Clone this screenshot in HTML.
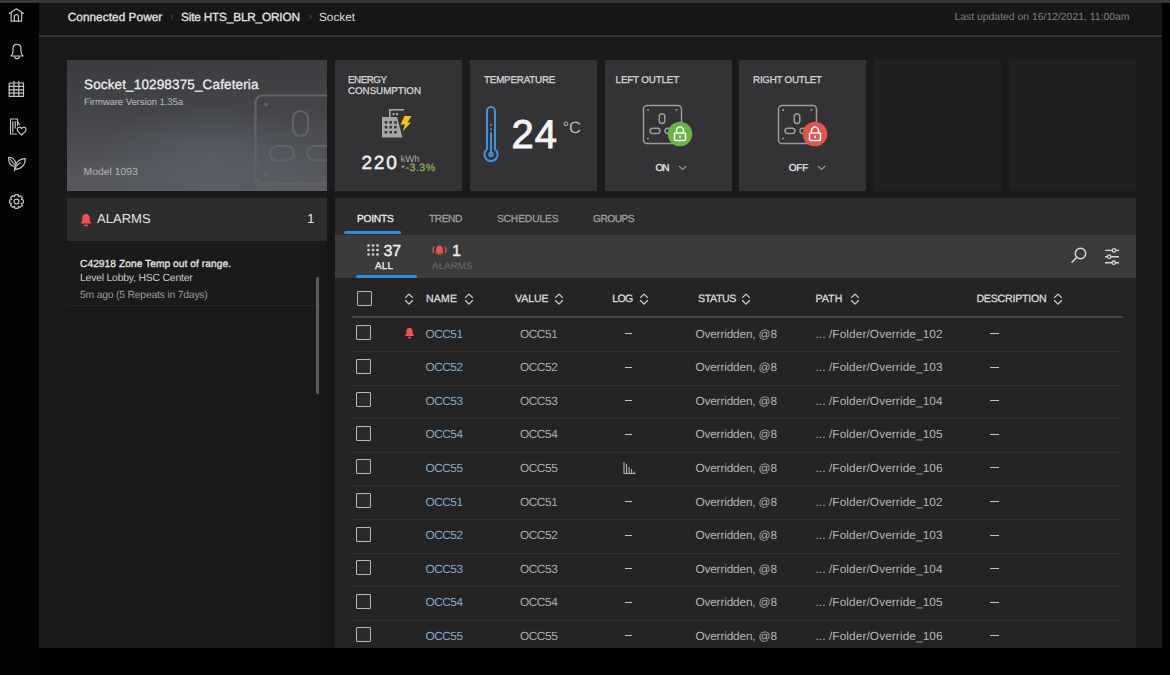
<!DOCTYPE html>
<html><head><meta charset="utf-8"><title>Socket</title>
<style>
*{margin:0;padding:0;box-sizing:border-box}
html,body{width:1170px;height:675px;overflow:hidden;background:#000;font-family:"Liberation Sans",sans-serif;text-rendering:geometricPrecision}
.r{position:absolute;display:block}
.t{position:absolute;white-space:nowrap}
</style></head><body>
<div class="r" style="left:0px;top:0px;width:1170px;height:675px;background:#000;"></div>
<div class="r" style="left:0px;top:0px;width:1170px;height:3px;background:#363636;"></div>
<div class="r" style="left:0px;top:3px;width:39px;height:672px;background:#030303;"></div>
<div class="r" style="left:39px;top:3px;width:1123px;height:645px;background:#1a1a1a;"></div>
<div class="r" style="left:39px;top:3px;width:1123px;height:31px;background:#171717;"></div>
<div class="r" style="left:39px;top:34px;width:1123px;height:1px;background:#121212;"></div>
<div class="r" style="left:39px;top:35px;width:1123px;height:2px;background:#313131;"></div>
<svg class="r" style="left:7px;top:7px;" width="18" height="17" viewBox="0 0 18 17"><g fill="none" stroke="#c4c4c4" stroke-width="1.2" stroke-linecap="round" stroke-linejoin="round"><path d="M2.3 6.4 L9.4 1.8 L16.5 6.4"/><path d="M4.2 5.3 V14.2 H14.6 V5.3"/><path d="M7.3 14 V9.6 Q7.3 7.6 9.4 7.6 Q11.5 7.6 11.5 9.6 V14"/></g></svg>
<svg class="r" style="left:7px;top:38px;" width="20" height="23" viewBox="0 0 20 23"><g fill="none" stroke="#c4c4c4" stroke-width="1.2" stroke-linecap="round" stroke-linejoin="round"><path d="M3.8 18 C5.5 16.8 6 15.5 6 13.5 V10.5 C6 7.8 7.8 6.3 10 6.3 C12.2 6.3 14 7.8 14 10.5 V13.5 C14 15.5 14.5 16.8 16.2 18 Z"/><path d="M7.6 18.3 A2.4 2.4 0 0 0 12.4 18.3"/></g></svg>
<svg class="r" style="left:7px;top:80px;" width="19" height="19" viewBox="0 0 19 19"><g fill="none" stroke="#c4c4c4" stroke-width="1.2" stroke-linecap="round" stroke-linejoin="round"><rect x="2.2" y="3" width="14.3" height="13.3"/><path d="M2.2 6.4 H16.5 M2.2 9.8 H16.5 M2.2 13.1 H16.5 M6.9 3 V16.3 M11.8 3 V16.3 M6.9 1.3 V4.5 M11.8 1.3 V4.5"/></g></svg>
<svg class="r" style="left:8px;top:117px;" width="20" height="20" viewBox="0 0 20 20"><g fill="none" stroke="#c4c4c4" stroke-width="1.2" stroke-linecap="round" stroke-linejoin="round"><path d="M8.5 17 H2.5 V2 H9.5 V8.5"/><path d="M4.8 4.5 V15 M7.2 4.5 V11"/><path d="M10 5 L11.5 7.5"/><path d="M13.6 18 L9.9 14.3 C8.6 13 9.2 10.2 11.3 10.2 C12.4 10.2 13.1 10.9 13.6 11.6 C14.1 10.9 14.8 10.2 15.9 10.2 C18 10.2 18.6 13 17.3 14.3 Z"/></g></svg>
<svg class="r" style="left:6px;top:154px;" width="21" height="19" viewBox="0 0 21 19"><g fill="none" stroke="#c4c4c4" stroke-width="1.2" stroke-linecap="round" stroke-linejoin="round"><path d="M8.2 12.3 C4.6 11.6 2.4 8.2 2.6 3.4 C6.2 3.4 9.2 5.6 9.6 9.2"/><path d="M8.9 15.4 C8.6 9.8 12.2 5 19.2 4.6 C19.6 10.6 15.6 15 8.9 15.4 Z"/><path d="M8.4 17 C8.8 13.8 11 10.8 14.2 9"/><path d="M4.5 5.5 L8.4 10.5"/></g></svg>
<svg class="r" style="left:7px;top:192px;" width="19" height="19" viewBox="0 0 19 19"><g fill="none" stroke="#c4c4c4" stroke-width="1.2" stroke-linecap="round" stroke-linejoin="round"><path d="M16.33 7.97 L16.33 11.03 L14.29 11.52 L14.32 11.45 L15.41 13.25 L13.25 15.41 L11.45 14.32 L11.52 14.29 L11.03 16.33 L7.97 16.33 L7.48 14.29 L7.55 14.32 L5.75 15.41 L3.59 13.25 L4.68 11.45 L4.71 11.52 L2.67 11.03 L2.67 7.97 L4.71 7.48 L4.68 7.55 L3.59 5.75 L5.75 3.59 L7.55 4.68 L7.48 4.71 L7.97 2.67 L11.03 2.67 L11.52 4.71 L11.45 4.68 L13.25 3.59 L15.41 5.75 L14.32 7.55 L14.29 7.48 Z"/><circle cx="9.5" cy="9.5" r="2.4"/></g></svg>
<div class="t" style="left:67.70px;top:11.82px;font-size:11.8px;line-height:11.8px;font-weight:normal;color:#e2e2e2;letter-spacing:0.058px;-webkit-text-stroke:0.3px #e2e2e2;">Connected Power</div>
<div class="t" style="left:170.00px;top:12.16px;font-size:11px;line-height:11px;font-weight:normal;color:#4a4a4a;">&#8250;</div>
<div class="t" style="left:181.00px;top:11.82px;font-size:11.8px;line-height:11.8px;font-weight:normal;color:#e2e2e2;letter-spacing:-0.174px;-webkit-text-stroke:0.3px #e2e2e2;">Site HTS_BLR_ORION</div>
<div class="t" style="left:308.50px;top:12.16px;font-size:11px;line-height:11px;font-weight:normal;color:#4a4a4a;">&#8250;</div>
<div class="t" style="left:319.00px;top:11.82px;font-size:11.8px;line-height:11.8px;font-weight:normal;color:#dedede;letter-spacing:-0.016px;">Socket</div>
<div class="t" style="left:954.50px;top:12.90px;font-size:10.4px;line-height:10.4px;font-weight:normal;color:#808080;letter-spacing:0.001px;">Last updated on 16/12/2021, 11:00am</div>
<div class="r" style="left:67px;top:60px;width:260px;height:131px;background:radial-gradient(ellipse 45% 40% at 55% 75%,rgba(95,105,118,0.45),rgba(95,105,118,0) 100%),linear-gradient(178deg,#3b3c3f 0%,#444549 40%,#515358 75%,#5a5c61 100%);overflow:hidden"></div>
<svg class="r" style="left:254px;top:94px;overflow:hidden" width="73" height="91" viewBox="0 0 73 91"><g fill="none" stroke="#606267" stroke-width="2.2"><rect x="1.5" y="1.5" width="95" height="88" rx="7"/><rect x="39" y="17" width="15" height="25" rx="7.5"/><rect x="16" y="52" width="24" height="14.5" rx="7.2"/><rect x="53.5" y="52" width="24" height="14.5" rx="7.2"/></g><g fill="#606267"><circle cx="12" cy="10.5" r="1.9"/><circle cx="12" cy="80" r="1.9"/></g></svg>
<div class="t" style="left:84.00px;top:78.39px;font-size:13.5px;line-height:13.5px;font-weight:normal;color:#ececec;letter-spacing:0.140px;-webkit-text-stroke:0.3px #ececec;">Socket_10298375_Cafeteria</div>
<div class="t" style="left:84.00px;top:98.44px;font-size:9.5px;line-height:9.5px;font-weight:normal;color:#b9babd;letter-spacing:-0.063px;">Firmware Version 1.35a</div>
<div class="t" style="left:83.50px;top:168.10px;font-size:10.4px;line-height:10.4px;font-weight:normal;color:#b5b6b9;letter-spacing:-0.001px;">Model 1093</div>
<div class="r" style="left:335.0px;top:60px;width:127px;height:131px;background:#333335;"></div>
<div class="r" style="left:469.75px;top:60px;width:127px;height:131px;background:#333335;"></div>
<div class="r" style="left:604.5px;top:60px;width:127px;height:131px;background:#333335;"></div>
<div class="r" style="left:739.25px;top:60px;width:127px;height:131px;background:#333335;"></div>
<div class="r" style="left:874.0px;top:60px;width:127px;height:131px;background:#202020;"></div>
<div class="r" style="left:1008.75px;top:60px;width:127px;height:131px;background:#202020;"></div>
<div class="t" style="left:348.00px;top:75.99px;font-size:9.8px;line-height:9.8px;font-weight:normal;color:#d2d2d2;letter-spacing:-0.475px;-webkit-text-stroke:0.3px #d2d2d2;">ENERGY</div>
<div class="t" style="left:348.00px;top:86.99px;font-size:9.8px;line-height:9.8px;font-weight:normal;color:#d2d2d2;letter-spacing:-0.048px;-webkit-text-stroke:0.3px #d2d2d2;">CONSUMPTION</div>
<div class="t" style="left:484.00px;top:76.19px;font-size:9.8px;line-height:9.8px;font-weight:normal;color:#d2d2d2;letter-spacing:-0.191px;-webkit-text-stroke:0.3px #d2d2d2;">TEMPERATURE</div>
<div class="t" style="left:615.60px;top:76.19px;font-size:9.8px;line-height:9.8px;font-weight:normal;color:#d2d2d2;letter-spacing:-0.156px;-webkit-text-stroke:0.3px #d2d2d2;">LEFT OUTLET</div>
<div class="t" style="left:753.10px;top:76.19px;font-size:9.8px;line-height:9.8px;font-weight:normal;color:#d2d2d2;letter-spacing:-0.261px;-webkit-text-stroke:0.3px #d2d2d2;">RIGHT OUTLET</div>
<svg class="r" style="left:375px;top:102px;" width="40" height="40" viewBox="0 0 40 40"><g fill="#a6a6a6"><path d="M7 15 H22 L27.5 35.5 H7 Z"/><rect x="14" y="7" width="15" height="1.6"/><rect x="14" y="7" width="1.6" height="8"/><rect x="17.5" y="11" width="2.2" height="2.2"/><rect x="21" y="11" width="2.2" height="2.2"/></g><g fill="#3a3a3c"><rect x="9.7" y="19.1" width="2.6" height="2.6"/><rect x="14.4" y="19.1" width="2.6" height="2.6"/><rect x="19.1" y="19.1" width="2.6" height="2.6"/><rect x="9.7" y="23.9" width="2.6" height="2.6"/><rect x="14.4" y="23.9" width="2.6" height="2.6"/><rect x="19.1" y="23.9" width="2.6" height="2.6"/><rect x="9.7" y="28.9" width="2.6" height="2.6"/><rect x="14.4" y="28.9" width="2.6" height="2.6"/><rect x="19.1" y="28.9" width="2.6" height="2.6"/></g><path fill="#f0c419" d="M29.5 14 H36.5 L32.5 20.5 H36 L27.5 29.5 L30 22.5 H25.5 Z"/></svg>
<div class="t" style="left:361.50px;top:153.72px;font-size:19px;line-height:19px;font-weight:normal;color:#f0f0f0;letter-spacing:1.748px;-webkit-text-stroke:0.5px #f0f0f0">220</div>
<div class="t" style="left:400.50px;top:155.40px;font-size:9.6px;line-height:9.6px;font-weight:normal;color:#a8a8a8;">kWh</div>
<svg class="r" style="left:400px;top:165px;" width="6" height="4" viewBox="0 0 6 4"><path d="M0.8 0.8 H5 L2.9 3.2 Z" fill="#9a9a9a"/></svg>
<div class="t" style="left:405.50px;top:162.65px;font-size:10.6px;line-height:10.6px;font-weight:normal;color:#88ab58;letter-spacing:0.478px;-webkit-text-stroke:0.3px #88ab58;">-3.3%</div>
<svg class="r" style="left:481px;top:103px;" width="20" height="62" viewBox="0 0 20 62"><g fill="none" stroke="#3d93d9" stroke-width="2"><path d="M6 46.3 V8 A4 4 0 0 1 14 8 V46.3 A6.6 6.6 0 1 1 6 46.3 Z"/><circle cx="10" cy="51.5" r="1.7"/><path d="M10 29.5 V49.5"/></g><g fill="#3d93d9"><circle cx="10" cy="21.8" r="1"/><circle cx="10" cy="26.2" r="1"/></g></svg>
<div class="t" style="left:511.50px;top:115.47px;font-size:40px;line-height:40px;font-weight:normal;color:#f5f5f5;letter-spacing:1.000px;-webkit-text-stroke:0.9px #f5f5f5">24</div>
<div class="t" style="left:562.50px;top:119.50px;font-size:16.5px;line-height:16.5px;font-weight:normal;color:#b8b8b8;">&#176;C</div>
<svg class="r" style="left:642.0px;top:103.5px;" width="42" height="41" viewBox="0 0 42 41"><g fill="none" stroke="#9a9a9a" stroke-width="1.5"><rect x="1.5" y="1.5" width="38" height="38" rx="3.5"/><rect x="17.25" y="9.85" width="5.5" height="9.6" rx="2.75"/><rect x="8" y="24.25" width="10" height="5.2" rx="2.6"/><rect x="23" y="24.25" width="10" height="5.2" rx="2.6"/></g><g fill="#9a9a9a"><circle cx="6" cy="6" r="1"/><circle cx="34.5" cy="6" r="1"/><circle cx="6" cy="34.5" r="1"/></g></svg>
<svg class="r" style="left:666.9px;top:121.1px;" width="26" height="26" viewBox="0 0 26 26"><circle cx="13" cy="13" r="12.3" fill="#69b443"/><g fill="none" stroke="#fff" stroke-width="1.6"><path d="M9.5 12 V9.5 A3.5 3.5 0 0 1 16.5 9.5 V12"/><rect x="7.5" y="12" width="11" height="7.5" rx="1"/></g><path d="M13 14.5 V17" stroke="#fff" stroke-width="1.5"/></svg>
<div class="t" style="left:655.50px;top:164.49px;font-size:10px;line-height:10px;font-weight:normal;color:#e6e6e6;letter-spacing:-1.000px;-webkit-text-stroke:0.3px #e6e6e6;">ON</div>
<svg class="r" style="left:677.8px;top:164.5px;" width="10" height="6" viewBox="0 0 10 6"><path d="M1 1 L4.6 4.4 L8.2 1" fill="none" stroke="#9a9a9a" stroke-width="1.1"/></svg>
<svg class="r" style="left:776.75px;top:103.5px;" width="42" height="41" viewBox="0 0 42 41"><g fill="none" stroke="#9a9a9a" stroke-width="1.5"><rect x="1.5" y="1.5" width="38" height="38" rx="3.5"/><rect x="17.25" y="9.85" width="5.5" height="9.6" rx="2.75"/><rect x="8" y="24.25" width="10" height="5.2" rx="2.6"/><rect x="23" y="24.25" width="10" height="5.2" rx="2.6"/></g><g fill="#9a9a9a"><circle cx="6" cy="6" r="1"/><circle cx="34.5" cy="6" r="1"/><circle cx="6" cy="34.5" r="1"/></g></svg>
<svg class="r" style="left:801.65px;top:121.1px;" width="26" height="26" viewBox="0 0 26 26"><circle cx="13" cy="13" r="12.3" fill="#e4534c"/><g fill="none" stroke="#fff" stroke-width="1.6"><path d="M9.5 12 V9.5 A3.5 3.5 0 0 1 16.5 9.5 V12"/><rect x="7.5" y="12" width="11" height="7.5" rx="1"/></g><path d="M13 14.5 V17" stroke="#fff" stroke-width="1.5"/></svg>
<div class="t" style="left:788.70px;top:164.49px;font-size:10px;line-height:10px;font-weight:normal;color:#e6e6e6;letter-spacing:-0.150px;-webkit-text-stroke:0.3px #e6e6e6;">OFF</div>
<svg class="r" style="left:817.3px;top:164.5px;" width="10" height="6" viewBox="0 0 10 6"><path d="M1 1 L4.6 4.4 L8.2 1" fill="none" stroke="#9a9a9a" stroke-width="1.1"/></svg>
<div class="r" style="left:67px;top:198px;width:260px;height:43px;background:#2d2d2d;"></div>
<svg class="r" style="left:80px;top:212.5px;" width="12" height="14" viewBox="0 0 12 14"><path fill="#f0524f" d="M6 0.8 C8.6 0.8 9.8 3 9.8 5.5 V8 L11.5 10.5 H0.5 L2.2 8 V5.5 C2.2 3 3.4 0.8 6 0.8 Z"/><rect x="4" y="11.6" width="4" height="1.6" rx="0.8" fill="#f0524f"/></svg>
<div class="t" style="left:97.10px;top:212.31px;font-size:13px;line-height:13px;font-weight:normal;color:#e2e2e2;">ALARMS</div>
<div class="t" style="left:307.30px;top:212.31px;font-size:13px;line-height:13px;font-weight:normal;color:#e2e2e2;">1</div>
<div class="t" style="left:80.00px;top:259.87px;font-size:10.2px;line-height:10.2px;font-weight:normal;color:#e4e4e4;letter-spacing:0.057px;-webkit-text-stroke:0.3px #e4e4e4;">C42918 Zone Temp out of range.</div>
<div class="t" style="left:80.00px;top:274.30px;font-size:10.4px;line-height:10.4px;font-weight:normal;color:#c9c9c9;letter-spacing:-0.198px;">Level Lobby, HSC Center</div>
<div class="t" style="left:80.00px;top:290.50px;font-size:10.4px;line-height:10.4px;font-weight:normal;color:#9b9b9b;letter-spacing:-0.216px;">5m ago (5 Repeats in 7days)</div>
<div class="r" style="left:67px;top:305px;width:253px;height:1px;background:#262626;"></div>
<div class="r" style="left:316px;top:277px;width:3px;height:117px;background:#5a5a5a;border-radius:1.5px"></div>
<div class="r" style="left:327px;top:191px;width:8px;height:457px;background:#171717;"></div>
<div class="r" style="left:335px;top:198px;width:801px;height:450px;background:#242424;"></div>
<div class="r" style="left:335px;top:198px;width:801px;height:37px;background:#2c2c2c;"></div>
<div class="r" style="left:335px;top:235px;width:801px;height:43px;background:#3b3b3b;"></div>
<div class="t" style="left:357.00px;top:214.87px;font-size:10.2px;line-height:10.2px;font-weight:normal;color:#e8e8e8;letter-spacing:-0.247px;-webkit-text-stroke:0.3px #e8e8e8;">POINTS</div>
<div class="t" style="left:429.00px;top:214.87px;font-size:10.2px;line-height:10.2px;font-weight:normal;color:#9c9c9c;letter-spacing:-0.448px;-webkit-text-stroke:0.3px #9c9c9c;">TREND</div>
<div class="t" style="left:496.90px;top:214.87px;font-size:10.2px;line-height:10.2px;font-weight:normal;color:#9c9c9c;letter-spacing:-0.085px;-webkit-text-stroke:0.3px #9c9c9c;">SCHEDULES</div>
<div class="t" style="left:593.00px;top:214.87px;font-size:10.2px;line-height:10.2px;font-weight:normal;color:#9c9c9c;letter-spacing:-0.511px;-webkit-text-stroke:0.3px #9c9c9c;">GROUPS</div>
<div class="r" style="left:343.5px;top:231px;width:57px;height:3px;background:#2a8edb;border-radius:1.5px"></div>
<svg class="r" style="left:366.5px;top:243.5px;" width="13" height="13" viewBox="0 0 13 13"><g fill="#d0d0d0"><circle cx="1.5" cy="1.5" r="1.35"/><circle cx="1.5" cy="6.0" r="1.35"/><circle cx="1.5" cy="10.5" r="1.35"/><circle cx="6.0" cy="1.5" r="1.35"/><circle cx="6.0" cy="6.0" r="1.35"/><circle cx="6.0" cy="10.5" r="1.35"/><circle cx="10.5" cy="1.5" r="1.35"/><circle cx="10.5" cy="6.0" r="1.35"/><circle cx="10.5" cy="10.5" r="1.35"/></g></svg>
<div class="t" style="left:383.50px;top:244.40px;font-size:16px;line-height:16px;font-weight:normal;color:#eeeeee;letter-spacing:-0.097px;-webkit-text-stroke:0.35px #eeeeee">37</div>
<div class="t" style="left:375.00px;top:262.39px;font-size:9.8px;line-height:9.8px;font-weight:normal;color:#eeeeee;letter-spacing:0.281px;-webkit-text-stroke:0.3px #eeeeee;">ALL</div>
<div class="r" style="left:355.5px;top:274.5px;width:61px;height:3px;background:#2a8edb;border-radius:1.5px"></div>
<svg class="r" style="left:431px;top:244px;" width="17" height="12" viewBox="0 0 17 12"><path fill="#e5534b" d="M8.5 1.5 C10.8 1.5 11.8 3.3 11.8 5.5 V8 L12.8 9.6 H4.2 L5.2 8 V5.5 C5.2 3.3 6.2 1.5 8.5 1.5 Z"/><rect x="7.2" y="10" width="2.6" height="1" fill="#e5534b"/><g fill="none" stroke="#e5534b" stroke-width="1.3"><path d="M2.8 2.5 Q1.2 5.8 2.8 9"/><path d="M14.2 2.5 Q15.8 5.8 14.2 9"/></g></svg>
<div class="t" style="left:452.00px;top:244.40px;font-size:16px;line-height:16px;font-weight:normal;color:#eeeeee;-webkit-text-stroke:0.35px #eeeeee">1</div>
<div class="t" style="left:432.30px;top:262.20px;font-size:9.6px;line-height:9.6px;font-weight:normal;color:#6c6c6c;letter-spacing:0.109px;">ALARMS</div>
<svg class="r" style="left:1068px;top:245px;" width="20" height="20" viewBox="0 0 20 20"><g fill="none" stroke="#d4d4d4" stroke-width="1.5"><circle cx="12.5" cy="8.5" r="5.2"/><path d="M8.8 12.3 L4 17.3" stroke-linecap="round"/></g></svg>
<svg class="r" style="left:1102px;top:246px;" width="20" height="20" viewBox="0 0 20 20"><g fill="none" stroke="#d4d4d4" stroke-width="1.4"><path d="M3 4.4 H17 M3 10.7 H17 M3 16.7 H17"/></g><g fill="#3b3b3b" stroke="#d4d4d4" stroke-width="1.3"><circle cx="12" cy="4.4" r="1.7"/><circle cx="7.2" cy="10.7" r="1.7"/><circle cx="11.7" cy="16.7" r="1.7"/></g></svg>
<div class="r" style="left:356.5px;top:291px;width:15px;height:15px;background:#2b2b2b;border:1.6px solid #b8b8b8;border-radius:1px"></div>
<svg class="r" style="left:404.0px;top:293px;" width="10" height="12" viewBox="0 0 10 12"><g fill="none" stroke="#cfcfcf" stroke-width="1.3" stroke-linejoin="round"><path d="M1.2 4.9 L5 1.1 L8.8 4.9"/><path d="M1.2 7.3 L5 11.1 L8.8 7.3"/></g></svg>
<div class="t" style="left:426.00px;top:294.45px;font-size:10.6px;line-height:10.6px;font-weight:normal;color:#d9d9d9;letter-spacing:0.130px;-webkit-text-stroke:0.3px #d9d9d9;">NAME</div>
<svg class="r" style="left:464.4px;top:293px;" width="10" height="12" viewBox="0 0 10 12"><g fill="none" stroke="#cfcfcf" stroke-width="1.3" stroke-linejoin="round"><path d="M1.2 4.9 L5 1.1 L8.8 4.9"/><path d="M1.2 7.3 L5 11.1 L8.8 7.3"/></g></svg>
<div class="t" style="left:514.90px;top:294.45px;font-size:10.6px;line-height:10.6px;font-weight:normal;color:#d9d9d9;letter-spacing:-0.042px;-webkit-text-stroke:0.3px #d9d9d9;">VALUE</div>
<svg class="r" style="left:554.4px;top:293px;" width="10" height="12" viewBox="0 0 10 12"><g fill="none" stroke="#cfcfcf" stroke-width="1.3" stroke-linejoin="round"><path d="M1.2 4.9 L5 1.1 L8.8 4.9"/><path d="M1.2 7.3 L5 11.1 L8.8 7.3"/></g></svg>
<div class="t" style="left:612.30px;top:294.45px;font-size:10.6px;line-height:10.6px;font-weight:normal;color:#d9d9d9;letter-spacing:-0.688px;-webkit-text-stroke:0.3px #d9d9d9;">LOG</div>
<svg class="r" style="left:638.9px;top:293px;" width="10" height="12" viewBox="0 0 10 12"><g fill="none" stroke="#cfcfcf" stroke-width="1.3" stroke-linejoin="round"><path d="M1.2 4.9 L5 1.1 L8.8 4.9"/><path d="M1.2 7.3 L5 11.1 L8.8 7.3"/></g></svg>
<div class="t" style="left:698.00px;top:294.45px;font-size:10.6px;line-height:10.6px;font-weight:normal;color:#d9d9d9;letter-spacing:-0.364px;-webkit-text-stroke:0.3px #d9d9d9;">STATUS</div>
<svg class="r" style="left:741.2px;top:293px;" width="10" height="12" viewBox="0 0 10 12"><g fill="none" stroke="#cfcfcf" stroke-width="1.3" stroke-linejoin="round"><path d="M1.2 4.9 L5 1.1 L8.8 4.9"/><path d="M1.2 7.3 L5 11.1 L8.8 7.3"/></g></svg>
<div class="t" style="left:815.40px;top:294.45px;font-size:10.6px;line-height:10.6px;font-weight:normal;color:#d9d9d9;letter-spacing:0.071px;-webkit-text-stroke:0.3px #d9d9d9;">PATH</div>
<svg class="r" style="left:849.9px;top:293px;" width="10" height="12" viewBox="0 0 10 12"><g fill="none" stroke="#cfcfcf" stroke-width="1.3" stroke-linejoin="round"><path d="M1.2 4.9 L5 1.1 L8.8 4.9"/><path d="M1.2 7.3 L5 11.1 L8.8 7.3"/></g></svg>
<div class="t" style="left:976.40px;top:294.45px;font-size:10.6px;line-height:10.6px;font-weight:normal;color:#d9d9d9;letter-spacing:-0.211px;-webkit-text-stroke:0.3px #d9d9d9;">DESCRIPTION</div>
<svg class="r" style="left:1053.4px;top:293px;" width="10" height="12" viewBox="0 0 10 12"><g fill="none" stroke="#cfcfcf" stroke-width="1.3" stroke-linejoin="round"><path d="M1.2 4.9 L5 1.1 L8.8 4.9"/><path d="M1.2 7.3 L5 11.1 L8.8 7.3"/></g></svg>
<div class="r" style="left:352px;top:316px;width:771px;height:2px;background:#444444;"></div>
<div class="r" style="left:352px;top:351.0px;width:771px;height:1px;background:#2f2f2f;"></div>
<div class="r" style="left:356px;top:325.0px;width:15px;height:15px;background:#2b2b2b;border:1.6px solid #b8b8b8;border-radius:1px"></div>
<svg class="r" style="left:404px;top:327px;" width="11" height="12" viewBox="0 0 11 12"><path fill="#f0524f" d="M5.5 0.8 C7.6 0.8 8.6 2.5 8.6 4.6 V6.8 L10.2 9 H0.8 L2.4 6.8 V4.6 C2.4 2.5 3.4 0.8 5.5 0.8 Z"/><rect x="3.8" y="9.8" width="3.4" height="1.6" rx="0.8" fill="#f0524f"/></svg>
<div class="t" style="left:425.40px;top:328.82px;font-size:11.8px;line-height:11.8px;font-weight:normal;color:#86a8c4;letter-spacing:-0.436px;">OCC51</div>
<div class="t" style="left:520.00px;top:328.82px;font-size:11.8px;line-height:11.8px;font-weight:normal;color:#ababab;letter-spacing:-0.411px;">OCC51</div>
<div class="r" style="left:624.5px;top:333px;width:7.5px;height:1px;background:#c0c0c0;"></div>
<div class="t" style="left:695.40px;top:328.82px;font-size:11.8px;line-height:11.8px;font-weight:normal;color:#b4b4b4;letter-spacing:-0.143px;">Overridden, @8</div>
<div class="t" style="left:815.40px;top:328.82px;font-size:11.8px;line-height:11.8px;font-weight:normal;color:#b4b4b4;letter-spacing:0.113px;">... /Folder/Override_102</div>
<div class="r" style="left:990px;top:333px;width:8.5px;height:1px;background:#c0c0c0;"></div>
<div class="r" style="left:352px;top:384.6px;width:771px;height:1px;background:#2f2f2f;"></div>
<div class="r" style="left:356px;top:358.6px;width:15px;height:15px;background:#2b2b2b;border:1.6px solid #b8b8b8;border-radius:1px"></div>
<div class="t" style="left:425.40px;top:362.02px;font-size:11.8px;line-height:11.8px;font-weight:normal;color:#86a8c4;letter-spacing:-0.436px;">OCC52</div>
<div class="t" style="left:520.00px;top:362.02px;font-size:11.8px;line-height:11.8px;font-weight:normal;color:#ababab;letter-spacing:-0.411px;">OCC52</div>
<div class="r" style="left:624.5px;top:367px;width:7.5px;height:1px;background:#c0c0c0;"></div>
<div class="t" style="left:695.40px;top:362.02px;font-size:11.8px;line-height:11.8px;font-weight:normal;color:#b4b4b4;letter-spacing:-0.143px;">Overridden, @8</div>
<div class="t" style="left:815.40px;top:362.02px;font-size:11.8px;line-height:11.8px;font-weight:normal;color:#b4b4b4;letter-spacing:0.113px;">... /Folder/Override_103</div>
<div class="r" style="left:990px;top:367px;width:8.5px;height:1px;background:#c0c0c0;"></div>
<div class="r" style="left:352px;top:418.2px;width:771px;height:1px;background:#2f2f2f;"></div>
<div class="r" style="left:356px;top:392.2px;width:15px;height:15px;background:#2b2b2b;border:1.6px solid #b8b8b8;border-radius:1px"></div>
<div class="t" style="left:425.40px;top:396.22px;font-size:11.8px;line-height:11.8px;font-weight:normal;color:#86a8c4;letter-spacing:-0.436px;">OCC53</div>
<div class="t" style="left:520.00px;top:396.22px;font-size:11.8px;line-height:11.8px;font-weight:normal;color:#ababab;letter-spacing:-0.411px;">OCC53</div>
<div class="r" style="left:624.5px;top:400px;width:7.5px;height:1px;background:#c0c0c0;"></div>
<div class="t" style="left:695.40px;top:396.22px;font-size:11.8px;line-height:11.8px;font-weight:normal;color:#b4b4b4;letter-spacing:-0.143px;">Overridden, @8</div>
<div class="t" style="left:815.40px;top:396.22px;font-size:11.8px;line-height:11.8px;font-weight:normal;color:#b4b4b4;letter-spacing:0.113px;">... /Folder/Override_104</div>
<div class="r" style="left:990px;top:400px;width:8.5px;height:1px;background:#c0c0c0;"></div>
<div class="r" style="left:352px;top:451.8px;width:771px;height:1px;background:#2f2f2f;"></div>
<div class="r" style="left:356px;top:425.8px;width:15px;height:15px;background:#2b2b2b;border:1.6px solid #b8b8b8;border-radius:1px"></div>
<div class="t" style="left:425.40px;top:429.42px;font-size:11.8px;line-height:11.8px;font-weight:normal;color:#86a8c4;letter-spacing:-0.436px;">OCC54</div>
<div class="t" style="left:520.00px;top:429.42px;font-size:11.8px;line-height:11.8px;font-weight:normal;color:#ababab;letter-spacing:-0.411px;">OCC54</div>
<div class="r" style="left:624.5px;top:434px;width:7.5px;height:1px;background:#c0c0c0;"></div>
<div class="t" style="left:695.40px;top:429.42px;font-size:11.8px;line-height:11.8px;font-weight:normal;color:#b4b4b4;letter-spacing:-0.143px;">Overridden, @8</div>
<div class="t" style="left:815.40px;top:429.42px;font-size:11.8px;line-height:11.8px;font-weight:normal;color:#b4b4b4;letter-spacing:0.113px;">... /Folder/Override_105</div>
<div class="r" style="left:990px;top:434px;width:8.5px;height:1px;background:#c0c0c0;"></div>
<div class="r" style="left:352px;top:485.4px;width:771px;height:1px;background:#2f2f2f;"></div>
<div class="r" style="left:356px;top:459.4px;width:15px;height:15px;background:#2b2b2b;border:1.6px solid #b8b8b8;border-radius:1px"></div>
<div class="t" style="left:425.40px;top:462.62px;font-size:11.8px;line-height:11.8px;font-weight:normal;color:#86a8c4;letter-spacing:-0.436px;">OCC55</div>
<div class="t" style="left:520.00px;top:462.62px;font-size:11.8px;line-height:11.8px;font-weight:normal;color:#ababab;letter-spacing:-0.411px;">OCC55</div>
<svg class="r" style="left:622px;top:461.0px;" width="15" height="14" viewBox="0 0 15 14"><g stroke="#b0b0b0" stroke-width="1.1" fill="none"><path d="M1.5 12.5 H13.5"/><path d="M2 1 V12.5 M4.5 3 V12.5 M7 6 V12.5 M9.5 8 V12.5 M12 10.5 V12.5"/></g></svg>
<div class="t" style="left:695.40px;top:462.62px;font-size:11.8px;line-height:11.8px;font-weight:normal;color:#b4b4b4;letter-spacing:-0.143px;">Overridden, @8</div>
<div class="t" style="left:815.40px;top:462.62px;font-size:11.8px;line-height:11.8px;font-weight:normal;color:#b4b4b4;letter-spacing:0.113px;">... /Folder/Override_106</div>
<div class="r" style="left:990px;top:467px;width:8.5px;height:1px;background:#c0c0c0;"></div>
<div class="r" style="left:352px;top:519.0px;width:771px;height:1px;background:#2f2f2f;"></div>
<div class="r" style="left:356px;top:493.0px;width:15px;height:15px;background:#2b2b2b;border:1.6px solid #b8b8b8;border-radius:1px"></div>
<div class="t" style="left:425.40px;top:496.82px;font-size:11.8px;line-height:11.8px;font-weight:normal;color:#86a8c4;letter-spacing:-0.436px;">OCC51</div>
<div class="t" style="left:520.00px;top:496.82px;font-size:11.8px;line-height:11.8px;font-weight:normal;color:#ababab;letter-spacing:-0.411px;">OCC51</div>
<div class="r" style="left:624.5px;top:501px;width:7.5px;height:1px;background:#c0c0c0;"></div>
<div class="t" style="left:695.40px;top:496.82px;font-size:11.8px;line-height:11.8px;font-weight:normal;color:#b4b4b4;letter-spacing:-0.143px;">Overridden, @8</div>
<div class="t" style="left:815.40px;top:496.82px;font-size:11.8px;line-height:11.8px;font-weight:normal;color:#b4b4b4;letter-spacing:0.113px;">... /Folder/Override_102</div>
<div class="r" style="left:990px;top:501px;width:8.5px;height:1px;background:#c0c0c0;"></div>
<div class="r" style="left:352px;top:552.6px;width:771px;height:1px;background:#2f2f2f;"></div>
<div class="r" style="left:356px;top:526.6px;width:15px;height:15px;background:#2b2b2b;border:1.6px solid #b8b8b8;border-radius:1px"></div>
<div class="t" style="left:425.40px;top:530.02px;font-size:11.8px;line-height:11.8px;font-weight:normal;color:#86a8c4;letter-spacing:-0.436px;">OCC52</div>
<div class="t" style="left:520.00px;top:530.02px;font-size:11.8px;line-height:11.8px;font-weight:normal;color:#ababab;letter-spacing:-0.411px;">OCC52</div>
<div class="r" style="left:624.5px;top:535px;width:7.5px;height:1px;background:#c0c0c0;"></div>
<div class="t" style="left:695.40px;top:530.02px;font-size:11.8px;line-height:11.8px;font-weight:normal;color:#b4b4b4;letter-spacing:-0.143px;">Overridden, @8</div>
<div class="t" style="left:815.40px;top:530.02px;font-size:11.8px;line-height:11.8px;font-weight:normal;color:#b4b4b4;letter-spacing:0.113px;">... /Folder/Override_103</div>
<div class="r" style="left:990px;top:535px;width:8.5px;height:1px;background:#c0c0c0;"></div>
<div class="r" style="left:352px;top:586.2px;width:771px;height:1px;background:#2f2f2f;"></div>
<div class="r" style="left:356px;top:560.2px;width:15px;height:15px;background:#2b2b2b;border:1.6px solid #b8b8b8;border-radius:1px"></div>
<div class="t" style="left:425.40px;top:564.22px;font-size:11.8px;line-height:11.8px;font-weight:normal;color:#86a8c4;letter-spacing:-0.436px;">OCC53</div>
<div class="t" style="left:520.00px;top:564.22px;font-size:11.8px;line-height:11.8px;font-weight:normal;color:#ababab;letter-spacing:-0.411px;">OCC53</div>
<div class="r" style="left:624.5px;top:568px;width:7.5px;height:1px;background:#c0c0c0;"></div>
<div class="t" style="left:695.40px;top:564.22px;font-size:11.8px;line-height:11.8px;font-weight:normal;color:#b4b4b4;letter-spacing:-0.143px;">Overridden, @8</div>
<div class="t" style="left:815.40px;top:564.22px;font-size:11.8px;line-height:11.8px;font-weight:normal;color:#b4b4b4;letter-spacing:0.113px;">... /Folder/Override_104</div>
<div class="r" style="left:990px;top:568px;width:8.5px;height:1px;background:#c0c0c0;"></div>
<div class="r" style="left:352px;top:619.8px;width:771px;height:1px;background:#2f2f2f;"></div>
<div class="r" style="left:356px;top:593.8px;width:15px;height:15px;background:#2b2b2b;border:1.6px solid #b8b8b8;border-radius:1px"></div>
<div class="t" style="left:425.40px;top:597.42px;font-size:11.8px;line-height:11.8px;font-weight:normal;color:#86a8c4;letter-spacing:-0.436px;">OCC54</div>
<div class="t" style="left:520.00px;top:597.42px;font-size:11.8px;line-height:11.8px;font-weight:normal;color:#ababab;letter-spacing:-0.411px;">OCC54</div>
<div class="r" style="left:624.5px;top:602px;width:7.5px;height:1px;background:#c0c0c0;"></div>
<div class="t" style="left:695.40px;top:597.42px;font-size:11.8px;line-height:11.8px;font-weight:normal;color:#b4b4b4;letter-spacing:-0.143px;">Overridden, @8</div>
<div class="t" style="left:815.40px;top:597.42px;font-size:11.8px;line-height:11.8px;font-weight:normal;color:#b4b4b4;letter-spacing:0.113px;">... /Folder/Override_105</div>
<div class="r" style="left:990px;top:602px;width:8.5px;height:1px;background:#c0c0c0;"></div>
<div class="r" style="left:356px;top:627.4px;width:15px;height:15px;background:#2b2b2b;border:1.6px solid #b8b8b8;border-radius:1px"></div>
<div class="t" style="left:425.40px;top:630.62px;font-size:11.8px;line-height:11.8px;font-weight:normal;color:#86a8c4;letter-spacing:-0.436px;">OCC55</div>
<div class="t" style="left:520.00px;top:630.62px;font-size:11.8px;line-height:11.8px;font-weight:normal;color:#ababab;letter-spacing:-0.411px;">OCC55</div>
<div class="r" style="left:624.5px;top:635px;width:7.5px;height:1px;background:#c0c0c0;"></div>
<div class="t" style="left:695.40px;top:630.62px;font-size:11.8px;line-height:11.8px;font-weight:normal;color:#b4b4b4;letter-spacing:-0.143px;">Overridden, @8</div>
<div class="t" style="left:815.40px;top:630.62px;font-size:11.8px;line-height:11.8px;font-weight:normal;color:#b4b4b4;letter-spacing:0.113px;">... /Folder/Override_106</div>
<div class="r" style="left:990px;top:635px;width:8.5px;height:1px;background:#c0c0c0;"></div>
</body></html>
